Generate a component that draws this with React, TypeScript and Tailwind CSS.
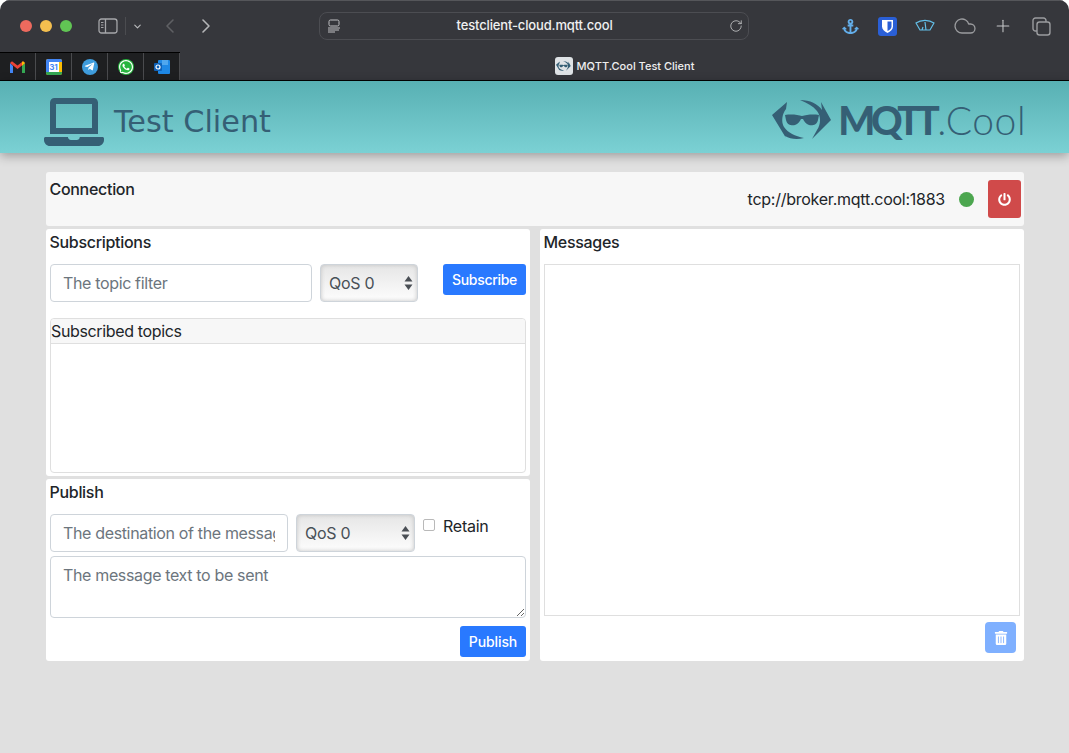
import { Cloud, Plus, ChevronDown, ChevronLeft, ChevronRight, RotateCw } from 'lucide-react';
import { FaAnchor, FaLaptop, FaPowerOff, FaTrashAlt, FaTelegramPlane, FaWhatsapp } from 'react-icons/fa';

const sans = "font-['Inter','Liberation_Sans',sans-serif]";

function QosSelect({ width }: { width: string }) {
  return (
    <div className={`relative h-[38px] shrink-0 ${width}`}>
      <select className="w-full h-full appearance-none rounded-[4px] border border-[#ced4da] bg-linear-to-b from-[#e6e6e6] to-[#fdfdfd] pl-2 text-base text-[#495057] shadow-[inset_0_0_4px_#c2c2c2] outline-none">
        <option>QoS 0</option>
      </select>
      <svg className="absolute right-[5px] top-[12px]" width="9" height="14" viewBox="0 0 9 14" fill="#4a4f55">
        <path d="M4.5 0 8.5 5.5H.5zM4.5 14 .5 8.5h8z" />
      </svg>
    </div>
  );
}

function GmailIcon() {
  return (
    <svg width="15" height="12" viewBox="0 0 15 12" fill="none">
      <path d="M0 2v10h3V5z" fill="#4285f4" />
      <path d="M12 5v7h3V2z" fill="#34a853" />
      <path d="M0 2 7.5 8 15 2 13 .3 7.5 4.5 2 .3z" fill="#ea4335" />
      <path d="M12 5 15 2 13 .3 12 1z" fill="#fbbc04" />
    </svg>
  );
}

function CalendarIcon() {
  return (
    <div className="w-[16px] h-[16px] rounded-[2px] bg-[#fbbc04] overflow-hidden flex flex-col">
      <div className="h-[3px] bg-[#4285f4]" />
      <div className="flex flex-1">
        <div className="w-[3px] bg-[#4285f4]" />
        <div className="flex-1 bg-white text-[8px] leading-[10px] font-bold text-[#4285f4] text-center">31</div>
        <div className="w-[3px] bg-[#fbbc04]" />
      </div>
      <div className="h-[3px] bg-[#34a853]" />
    </div>
  );
}

function OutlookIcon() {
  return (
    <svg width="16" height="14" viewBox="0 0 16 14">
      <rect x="4" y="0" width="12" height="14" rx="1" fill="#1e88e5" />
      <rect x="8" y="0" width="6" height="5" fill="#50a7ee" />
      <rect x="0" y="3" width="8" height="8" rx="1" fill="#0f62b8" />
      <circle cx="4" cy="7" r="2" fill="none" stroke="#fff" strokeWidth="1.2" />
    </svg>
  );
}

function CoolMark({ className }: { className?: string }) {
  return (
    <svg className={className} viewBox="0 0 60 40" fill="currentColor">
      <path d="M0 15 15 2l-1 7c-4 5-5 13-2 18 4 6 11 9 20 11-7 2-14 1-19-2l1 2z" />
      <path d="M28 0c10 0 18 4 22 10l-1-8 10 18-19 19 5-9c4-6 4-14 0-19-4-5-10-8-17-11z" />
      <path d="M13 15c7-1 13 0 17 1 4-1 10-2 17-1l-1 5c-1 5-6 6-9 5-3-1-5-4-6-6h-2c-1 2-3 5-6 6-3 1-8 0-9-5z" />
    </svg>
  );
}

export default function App() {
  return (
    <div className={`min-h-[753px] bg-white ${sans}`}>
      <div className="h-[753px] overflow-hidden rounded-t-[10px] bg-[#e0e0e0] flex flex-col">
        {/* Browser toolbar */}
        <div className="h-[52px] shrink-0 bg-[#36373c] border-t border-[#55565a] flex items-center pl-[20px] pr-[18px] pb-[1px]">
          <div className="flex items-center gap-[8px]">
            <span className="w-[12px] h-[12px] rounded-full bg-[#ed6a5e]" />
            <span className="w-[12px] h-[12px] rounded-full bg-[#f4bf4f]" />
            <span className="w-[12px] h-[12px] rounded-full bg-[#61c554]" />
          </div>
          <svg className="ml-[26px]" width="20" height="16" viewBox="0 0 20 16" fill="none" stroke="#a5a6a9" strokeWidth="1.3">
            <rect x="1" y="1" width="18" height="14" rx="2.5" />
            <path d="M7.5 1v14" />
            <path d="M3 4.5h2.5M3 7h2.5M3 9.5h2.5" strokeWidth="1" />
          </svg>
          <div className="w-px h-[18px] bg-[#4b4c50] ml-[7px]" />
          <ChevronDown className="ml-[6px] text-[#b9babc]" size={11} strokeWidth={2.5} />
          <ChevronLeft className="ml-[15px] text-[#5f6064]" size={24} strokeWidth={1.6} />
          <ChevronRight className="ml-[12px] text-[#b5b6b8]" size={24} strokeWidth={1.6} />
          <div className="ml-[101px] w-[431px] h-[28px] rounded-[8px] border border-[#4c4d52] flex items-center justify-between pl-[8px] pr-[5px] text-[#c5c6c8]">
            <svg width="12" height="14" viewBox="0 0 12 14" fill="none" stroke="#c0c1c3" strokeWidth="1">
              <rect x="1" y="1" width="10" height="6" rx="1.5" />
              <path d="M0 9h12M0 11h11M0 13h7" />
            </svg>
            <span className="text-[13px] font-medium tracking-[-0.15px] text-[#f0f0f1]">testclient-cloud.mqtt.cool</span>
            <RotateCw size={14} strokeWidth={1.4} />
          </div>
          <FaAnchor className="ml-[93px] text-[#63aeea]" size={17} />
          <div className="ml-[19px] w-[19px] h-[19px] rounded-[3px] bg-[#2a5fd6] flex items-center justify-center">
            <svg width="11" height="13" viewBox="0 0 11 13">
              <path d="M0 0h11v6.5c0 3-2.5 5-5.500 6.500C2.500 11.500 0 9.500 0 6.500z" fill="#fff" />
              <path d="M5.500 1.500h4v5c0 2-2 3.500-4 4.500z" fill="#2a5fd6" />
            </svg>
          </div>
          <svg className="ml-[18px]" width="20" height="14" viewBox="0 0 20 14" fill="none" stroke="#63bfe8" strokeWidth="1.2">
            <path d="M1 4C6 .5 14 .5 19 4l-4 7H5zM10 3l1 8M7 11l1-3" />
          </svg>
          <Cloud className="ml-[18px] text-[#9b9c9f]" size={24} strokeWidth={1.3} />
          <Plus className="ml-[16px] text-[#c4c5c7]" size={20} strokeWidth={1.3} />
          <svg className="ml-[19px]" width="19" height="19" viewBox="0 0 19 19" fill="none" stroke="#9b9c9f" strokeWidth="1.4">
            <rect x="5" y="5" width="13" height="13" rx="2.5" />
            <path d="M5 14H3.500A2.500 2.500 0 0 1 1 11.500v-8A2.500 2.500 0 0 1 3.500 1h8A2.500 2.500 0 0 1 14 3.500V5" />
          </svg>
        </div>

        {/* Pinned tabs and title */}
        <div className="h-[28px] shrink-0 flex bg-[#36373c]">
          <div className="w-[180px] flex bg-[#1e1f21] border-t border-black">
            <div className="w-[36px] flex items-center justify-center border-r border-[#4a4b4e]"><GmailIcon /></div>
            <div className="w-[36px] flex items-center justify-center border-r border-[#4a4b4e]"><CalendarIcon /></div>
            <div className="w-[36px] flex items-center justify-center border-r border-[#4a4b4e]">
              <div className="w-[16px] h-[16px] rounded-full bg-[#3f9ddd] flex items-center justify-center text-white">
                <FaTelegramPlane size={11} />
              </div>
            </div>
            <div className="w-[36px] flex items-center justify-center border-r border-[#4a4b4e]">
              <FaWhatsapp className="text-white bg-[#27b43e] rounded-full" size={16} />
            </div>
            <div className="w-[36px] flex items-center justify-center border-r border-[#4a4b4e]"><OutlookIcon /></div>
          </div>
          <div className="flex-1 flex items-center justify-center gap-[4px]">
            <div className="w-[18px] h-[18px] rounded-[3px] bg-[#dfe3e6] flex items-center justify-center text-[#355f75]">
              <CoolMark className="w-[15px] h-[10px]" />
            </div>
            <span className="text-[11px] font-medium text-[#eeeeef]">MQTT.Cool Test Client</span>
          </div>
        </div>

        {/* App header */}
        <header className="h-[73px] shrink-0 border-t border-black bg-linear-to-b from-[#58b0b3] to-[#7bd1d4] shadow-[0_3px_10px_rgba(0,0,0,0.3)] flex items-center justify-between pt-[10px] pl-[44px] pr-[43px] text-[#355f75]">
          <div className="flex items-center gap-[10px]">
            <FaLaptop size={60} />
            <span className="font-['DejaVu_Sans',sans-serif] text-[30.300px] leading-none">Test Client</span>
          </div>
          <div className="flex items-center gap-[6px] mb-[4px]">
            <CoolMark className="w-[60px] h-[40px]" />
            <span className="font-['Lato',sans-serif] text-[39px] leading-none">
              <span className="font-black tracking-[-4.500px]">MQTT</span>
              <span className="font-light tracking-[0.500px] ml-[2px]">.Cool</span>
            </span>
          </div>
        </header>

        <main className="w-[978px] ml-[46px] mt-[19px] flex flex-col gap-[3px] text-[#212529] text-base tracking-[-0.25px]">
          {/* Connection */}
          <section className="h-[54px] rounded-[3px] bg-[#f7f7f7] flex justify-between pl-[4px] pr-[3px]">
            <h2 className="mt-[5px] -ml-[0.500px] font-[450] tracking-[-0.3px] leading-[24px]">Connection</h2>
            <div className="flex items-center h-[38px] mt-[8px]">
              <span>tcp://broker.mqtt.cool:1883</span>
              <span className="ml-[14px] w-[15px] h-[15px] rounded-full bg-[#4ca64f]" />
              <button className="ml-[14px] w-[33px] h-[38px] rounded-[3px] bg-[#d04a4a] text-white flex items-center justify-center">
                <FaPowerOff size={13} />
              </button>
            </div>
          </section>

          <div className="flex gap-[10px]">
            <div className="w-[484px] flex flex-col gap-[3px]">
              {/* Subscriptions */}
              <section className="h-[247px] rounded-[3px] bg-white px-[4px] pt-[1px]">
                <h2 className="-ml-[0.500px] font-[450] tracking-[-0.3px] leading-[24px]">Subscriptions</h2>
                <div className="mt-[10px] flex items-start">
                  <input
                    placeholder="The topic filter"
                    className="w-[262px] h-[38px] rounded-[4px] border border-[#ced4da] px-[12px] tracking-[-0.35px] placeholder:text-[#6c757d] outline-none"
                  />
                  <div className="ml-[8px]"><QosSelect width="w-[98px]" /></div>
                  <button className="ml-[25px] w-[83px] h-[31px] rounded-[3px] bg-[#2979ff] text-sm font-medium tracking-[-0.3px] text-white">Subscribe</button>
                </div>
                <div className="mt-[16px] h-[155px] rounded-[4px] border border-[#dfdfdf]">
                  <div className="h-[25px] bg-[#f7f7f7] border-b border-[#dfdfdf] leading-[24px] tracking-[-0.35px] rounded-t-[4px]">Subscribed topics</div>
                </div>
              </section>

              {/* Publish */}
              <section className="h-[182px] rounded-[3px] bg-white px-[4px] pt-[1px]">
                <h2 className="-ml-[0.500px] font-[450] tracking-[-0.3px] leading-[24px]">Publish</h2>
                <div className="mt-[10px] flex items-start">
                  <input
                    placeholder="The destination of the message"
                    className="w-[238px] h-[38px] rounded-[4px] border border-[#ced4da] px-[12px] tracking-[-0.35px] placeholder:text-[#6c757d] outline-none"
                  />
                  <div className="ml-[8px]"><QosSelect width="w-[119px]" /></div>
                  <label className="ml-[8px] flex items-center gap-[8px] h-[24px]">
                    <input type="checkbox" className="appearance-none w-[12px] h-[12px] rounded-[2px] border border-[#b9b9b9] bg-white mb-[2px]" />
                    <span>Retain</span>
                  </label>
                </div>
                <textarea
                  placeholder="The message text to be sent"
                  className="mt-[4px] block w-[476px] h-[62px] rounded-[4px] border border-[#ced4da] px-[12px] py-[6px] tracking-[-0.35px] placeholder:text-[#6c757d] outline-none"
                />
                <div className="mt-[8px] flex justify-end">
                  <button className="w-[66px] h-[31px] rounded-[3px] bg-[#2979ff] text-sm font-medium tracking-[-0.1px] text-white">Publish</button>
                </div>
              </section>
            </div>

            {/* Messages */}
            <section className="w-[484px] h-[432px] rounded-[3px] bg-white px-[4px] pt-[1px]">
              <h2 className="-ml-[0.500px] font-[450] tracking-[-0.3px] leading-[24px]">Messages</h2>
              <div className="mt-[10px] h-[352px] border border-[#dfdfdf]" />
              <div className="mt-[6px] flex justify-end pr-[4px]">
                <button className="w-[31px] h-[31px] rounded-[4px] bg-[#7fb0ff] text-white flex items-center justify-center">
                  <FaTrashAlt size={14} />
                </button>
              </div>
            </section>
          </div>
        </main>
      </div>
    </div>
  );
}
